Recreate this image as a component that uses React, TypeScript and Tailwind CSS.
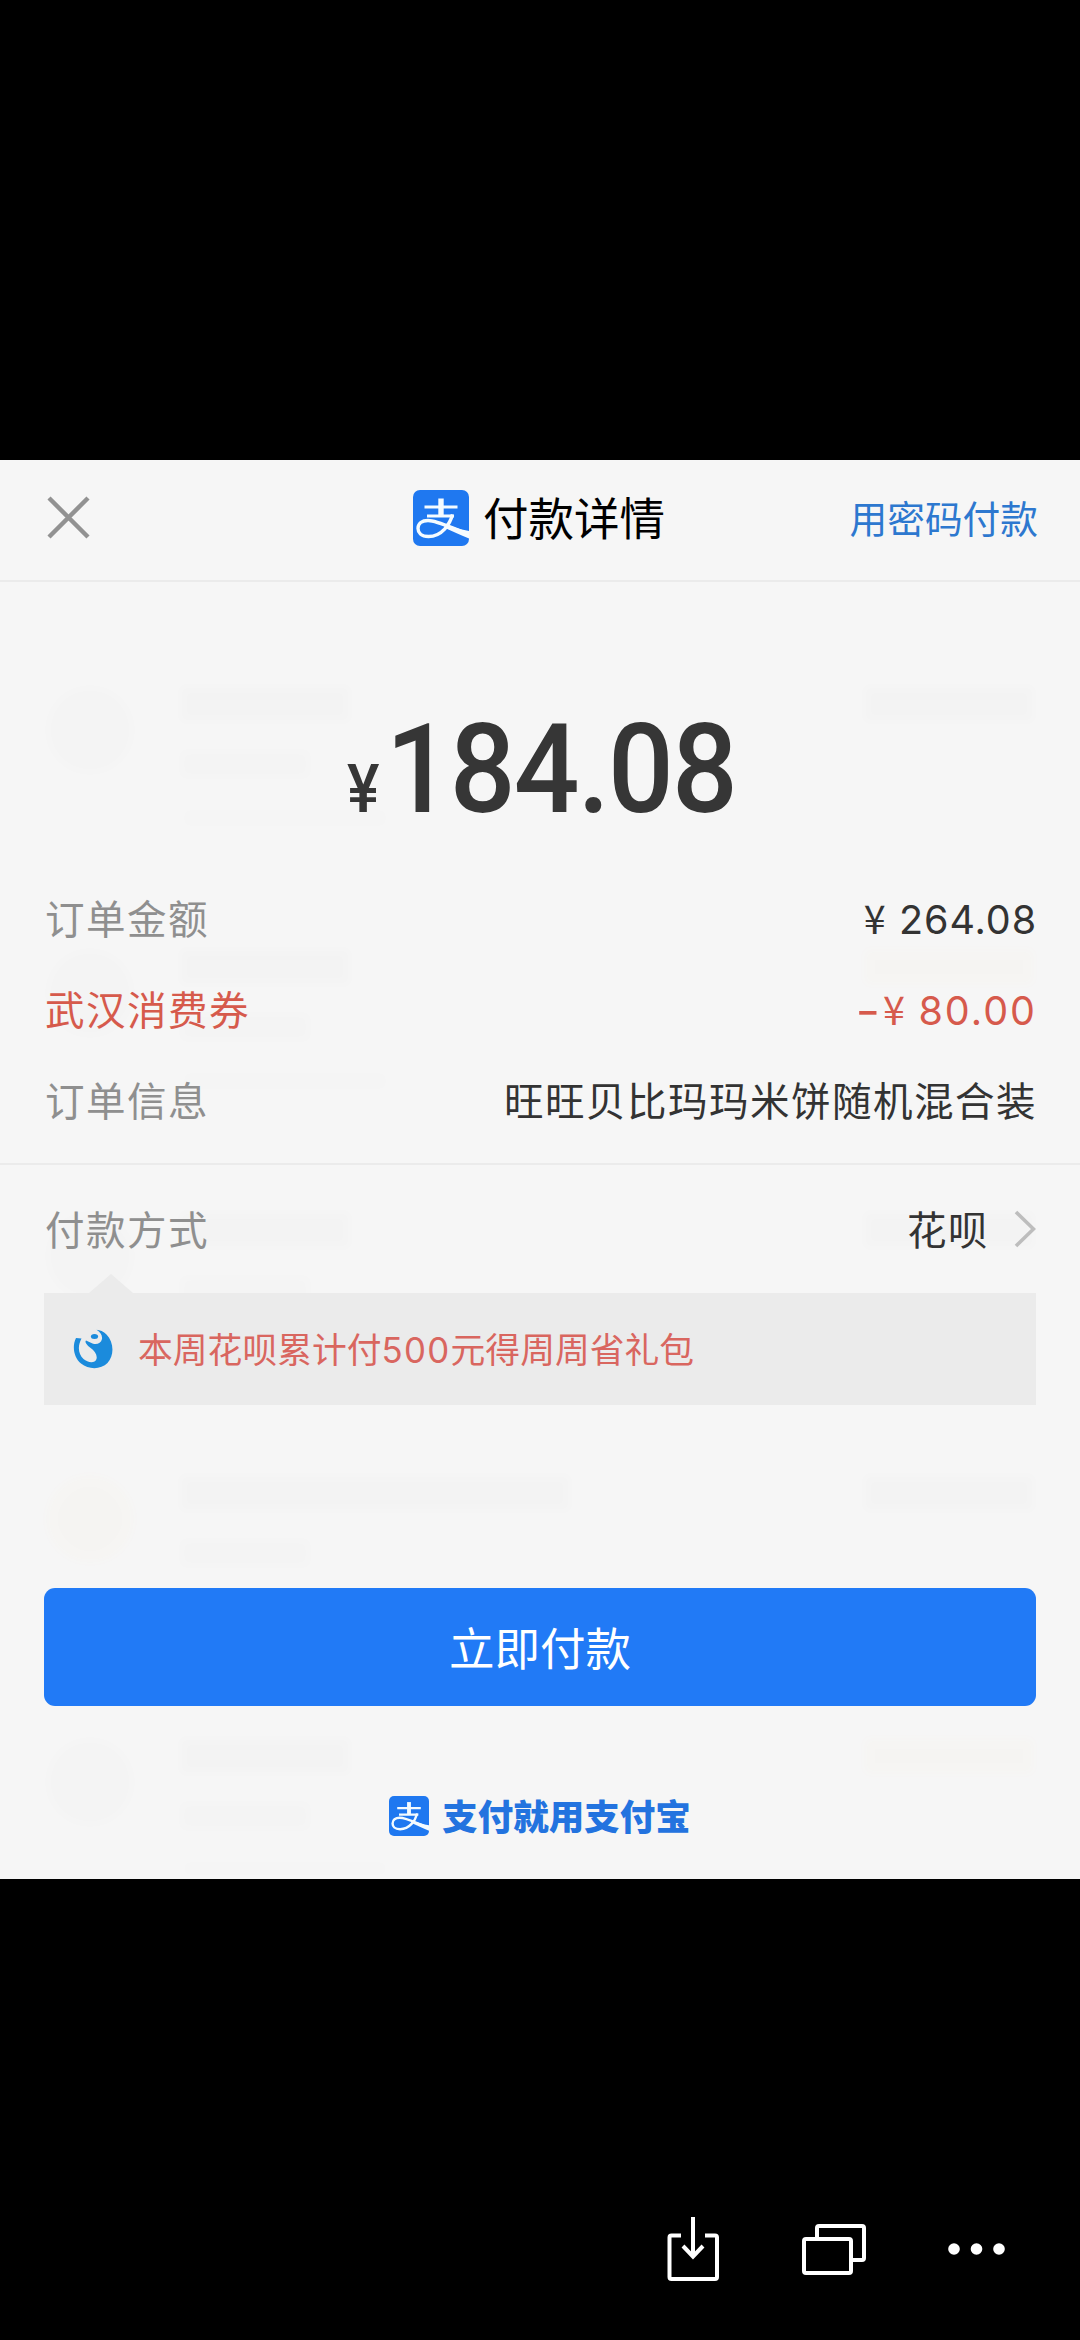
import { clsx } from "clsx";

interface DetailRow {
  label: string;
  value: string;
  tone: "normal" | "discount";
  /** Amounts get a currency sign in front and Latin digits */
  isAmount?: boolean;
}

const details: DetailRow[] = [
  { label: "订单金额", value: "264.08", tone: "normal", isAmount: true },
  { label: "武汉消费券", value: "80.00", tone: "discount", isAmount: true },
  { label: "订单信息", value: "旺旺贝比玛玛米饼随机混合装", tone: "normal" },
];

/**
 * Alipay mark: 支 on a rounded blue square
 */
function AlipayLogo({ className }: { className?: string }) {
  return (
    <svg viewBox="0 0 56 56" className={className} aria-hidden="true">
      <rect width="56" height="56" rx="7" fill="#1f78f0" />
      <path d="M11.500 17H44.500M14 26H41" stroke="#f4fbff" strokeWidth="3" fill="none" />
      <path d="M28 8.500V26" stroke="#f4fbff" strokeWidth="5.400" fill="none" />
      <path
        d="M39.500 24.500C37 34 29 46.500 15.500 46.500C8 46.500 5 42.500 5 38.500C5 33.500 9 30.500 15 30.500C24 30.500 35 36.500 56 44.500"
        stroke="#f4fbff"
        strokeWidth="3.400"
        fill="none"
      />
      <path d="M33 34.500C40 37 48 39.500 56 41V48.500C47 45 39 41 31 37.500Z" fill="#f4fbff" />
    </svg>
  );
}

function HuabeiIcon() {
  return (
    <svg viewBox="0 0 40 40" className="size-10" aria-hidden="true">
      <path
        d="M3 9C-1 17 .5 28 8 34.500C16 41 28 40.500 34.500 34C41.500 26.500 41 13 33.500 5.500C30.500 2.500 27 1 23.500 .8C27.500 3 29.500 6.500 29 10C28 14.500 23.500 16 19.500 14.500L13 11.500C11.500 13 13.500 15.500 17 18.500C22 22 24.500 26 23.500 30C22 34.500 15 34 10.500 30C5 25 4.500 17 8.500 9.500Z"
        fill="#1b8bdc"
      />
      <ellipse cx="21.500" cy="7.500" rx="3.600" ry="2.500" fill="#1b8bdc" />
    </svg>
  );
}

/**
 * Bill list that faintly shines through the sheet
 */
function BackdropList() {
  return (
    <div className="pointer-events-none absolute inset-0 overflow-hidden opacity-[0.011] blur-[5px]" aria-hidden="true">
      <div className="flex flex-col pt-[226px]">
        {[0, 1, 2, 3, 4].map((i) => (
          <div key={i} className="flex h-[263px] items-start gap-[46px] px-[46px]">
            <div className={clsx("size-[88px] rounded-full", i === 3 ? "bg-yellow-500" : "bg-black/60")} />
            <div className="flex flex-1 flex-col gap-7">
              <div className={clsx("h-9 bg-black/80", i === 3 ? "w-[390px]" : "w-[170px]")} />
              <div className="h-7 w-[130px] bg-black/60" />
              <div className="h-6 w-[210px] bg-black/30" />
            </div>
            <div className={clsx("h-9 w-[170px]", i % 3 === 1 ? "bg-yellow-500" : "bg-black/80")} />
          </div>
        ))}
      </div>
    </div>
  );
}

function Header() {
  return (
    <header className="grid h-[122px] grid-cols-[1fr_auto_1fr] items-center border-b-2 border-[#ebebeb] pr-[42px] pl-[47px]">
      <button type="button" aria-label="关闭" className="-mt-1.5 w-fit">
        <svg viewBox="0 0 43 43" className="size-[43px]" fill="none" stroke="#929292" strokeWidth="4.400">
          <path d="M2 2L41 41M41 2L2 41" />
        </svg>
      </button>
      <h1 className="-ml-[7px] flex items-center gap-[14px] text-[45.500px] leading-none text-black">
        <AlipayLogo className="-mt-1 size-[56px]" />
        <span className="-mt-1.5">付款详情</span>
      </h1>
      <button type="button" className="-mt-1.5 text-right text-[37.700px] leading-none text-[#2d78cf]">
        用密码付款
      </button>
    </header>
  );
}

function Amount() {
  return (
    <div className="flex h-[293px] scale-x-[0.926] items-baseline justify-center pt-[118px] pl-[3px] font-[Roboto] font-medium text-[#363636]">
      <span className="mr-[7px] text-[66px] leading-[140px]">¥</span>
      <span className="text-[125px] leading-[140px] tracking-[-2px]">184.08</span>
    </div>
  );
}

function Details() {
  return (
    <dl className="-mt-[4px] flex h-[294px] flex-col border-b-2 border-[#ebebeb] px-[45px] text-[39.500px] leading-[91px] tracking-[1.500px]">
      {details.map(({ label, value, tone, isAmount }) => {
        const discount = tone === "discount";
        return (
          <div key={label} className={clsx("flex h-[91px] justify-between", discount ? "text-[#d65a4c]" : "text-[#333333]")}>
            <dt className={clsx(!discount && "text-[#8f8f8f]")}>{label}</dt>
            <dd className="-mr-[2px] flex items-baseline">
              {isAmount && (
                <span className="mr-[12px]">
                  {discount && <span className="mr-[4px] inline-block scale-x-[1.350] font-[Inter] leading-none font-medium">-</span>}¥
                </span>
              )}
              <span className={clsx(isAmount && "font-[Inter]", isAmount && (discount ? "tracking-[2px]" : "tracking-[0.900px]"))}>
                {value}
              </span>
            </dd>
          </div>
        );
      })}
    </dl>
  );
}

function PaymentMethod() {
  return (
    <section className="px-[44px]">
      <div className="flex h-[128px] items-center justify-between pl-px text-[39.500px] leading-none tracking-[1.500px]">
        <span className="-mt-[3px] text-[#8f8f8f]">付款方式</span>
        <span className="flex items-center gap-[25px] text-[#333333]">
          <span className="-mt-[3px]">花呗</span>
          <svg viewBox="0 0 22 38" className="h-[38px] w-[22px]" fill="none" stroke="#bdbdbd" strokeWidth="3.600">
            <path d="M2 2L19.500 19L2 36" />
          </svg>
        </span>
      </div>
      <div className="relative flex h-[112px] items-center gap-[25px] bg-[#ebebeb] pl-[29px]">
        <svg viewBox="0 0 44 19" className="absolute -top-[19px] left-[45px] h-[19px] w-11" fill="#ebebeb">
          <path d="M22 0L44 19H0Z" />
        </svg>
        <HuabeiIcon />
        <p className="text-[34.800px] leading-none text-[#d9665f]">
          本周花呗累计付<span className="font-[Inter] tracking-[1.300px]">500</span>元得周周省礼包
        </p>
      </div>
    </section>
  );
}

function BottomBar() {
  return (
    <footer className="flex flex-1 items-end justify-end pr-[74px] pb-[57px] text-white">
      <div className="flex items-center gap-[82px]">
        <svg viewBox="0 0 54 68" className="h-[68px] w-[54px]" fill="none" stroke="currentColor" strokeWidth="4">
          <path d="M15 20.500H5.500Q3.500 20.500 3.500 22.500V62Q3.500 64 5.500 64H49Q51 64 51 62V22.500Q51 20.500 49 20.500H39" />
          <path d="M27 2V41M17 31L27 41.500L37 31" />
        </svg>
        <svg viewBox="0 0 64 51" className="h-[51px] w-[64px]" fill="none" stroke="currentColor" strokeWidth="4">
          <rect x="2" y="15" width="47" height="34" rx="2" />
          <path d="M15 15V4Q15 2 17 2H60Q62 2 62 4V34Q62 36 60 36H49" />
        </svg>
        <svg viewBox="0 0 58 12" className="h-3 w-[58px]" fill="currentColor">
          <circle cx="6" cy="6" r="5.800" />
          <circle cx="28.500" cy="6" r="5.800" />
          <circle cx="51" cy="6" r="5.800" />
        </svg>
      </div>
    </footer>
  );
}

export default function App() {
  return (
    <div className="flex h-[2340px] w-[1080px] flex-col bg-black pt-[460px] font-['Noto_Sans_CJK_SC',sans-serif]">
      <main className="relative h-[1419px] bg-[#f6f6f6]">
        <BackdropList />
        <div className="relative flex h-full flex-col">
          <Header />
          <Amount />
          <Details />
          <PaymentMethod />
          <div className="mt-[183px] px-[44px]">
            <button
              type="button"
              className="h-[118px] w-full rounded-[11px] bg-[#217af6] text-[45.500px] leading-none text-white"
            >
              立即付款
            </button>
          </div>
          <div className="mt-[90px] flex items-center justify-center gap-[13px] text-[#2373df]">
            <AlipayLogo className="size-10" />
            <span className="-mt-0.5 text-[35.500px] leading-none font-black">支付就用支付宝</span>
          </div>
        </div>
      </main>
      <BottomBar />
    </div>
  );
}
